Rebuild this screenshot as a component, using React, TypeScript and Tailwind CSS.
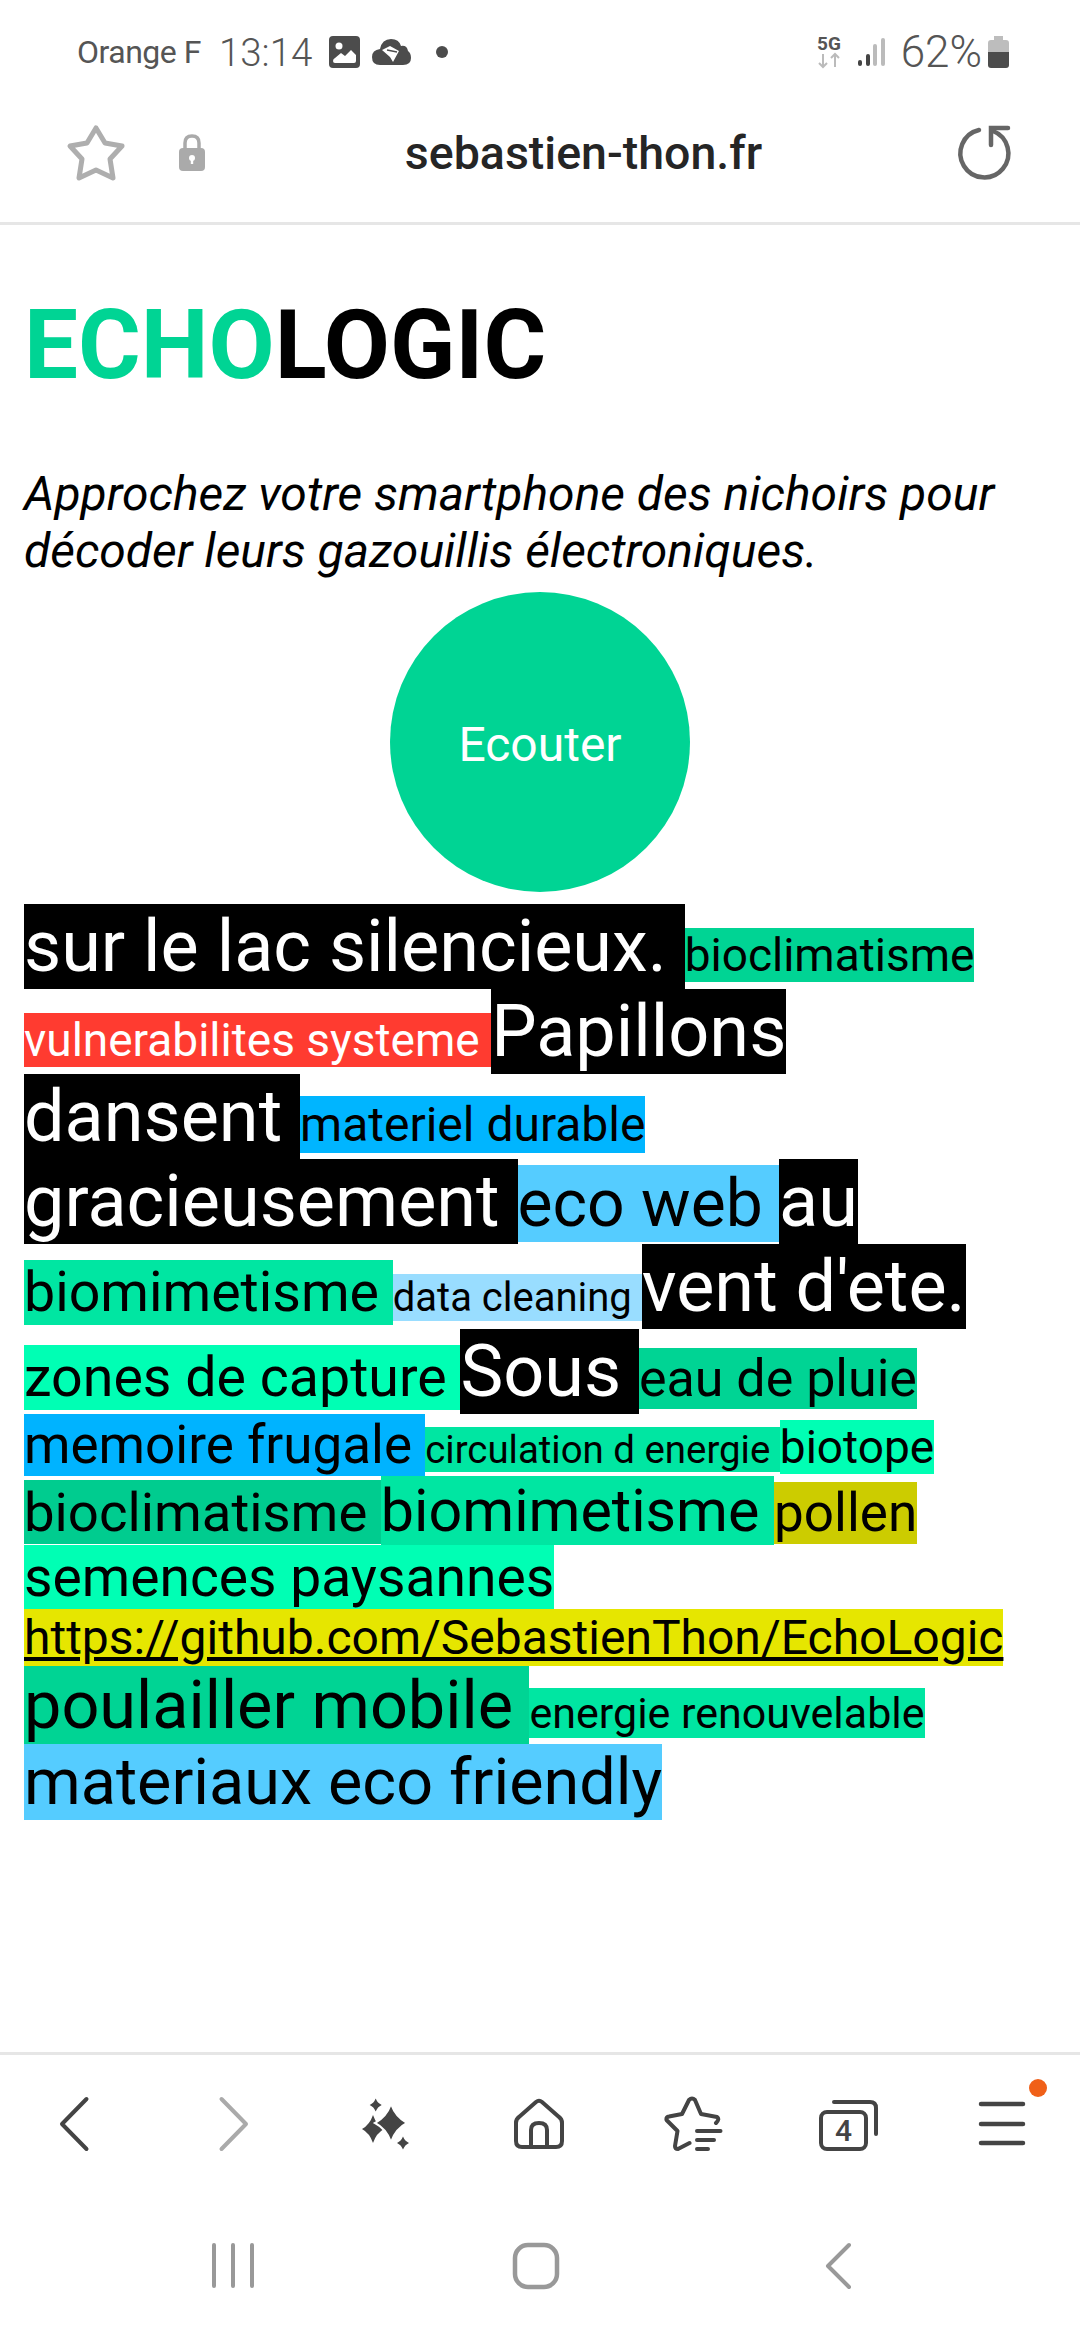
import React from "react";

type Tag = {
  text: string;
  size: string;
  color: string;
};

const tags: Tag[] = [
  { text: "sur le lac silencieux. ", size: "text-[72px]", color: "bg-black text-white" },
  { text: "bioclimatisme ", size: "text-[46px]", color: "bg-[#00d494] text-black" },
  { text: "vulnerabilites systeme ", size: "text-[46px]", color: "bg-[#ff3b30] text-white" },
  { text: "Papillons ", size: "text-[72px]", color: "bg-black text-white" },
  { text: "dansent ", size: "text-[72px]", color: "bg-black text-white" },
  { text: "materiel durable ", size: "text-[48px]", color: "bg-[#00b5ff] text-black" },
  { text: "gracieusement ", size: "text-[72px]", color: "bg-black text-white" },
  { text: "eco web ", size: "text-[66px]", color: "bg-[#55ccff] text-black" },
  { text: "au ", size: "text-[72px]", color: "bg-black text-white" },
  { text: "biomimetisme ", size: "text-[55.5px]", color: "bg-[#00e6a2] text-black" },
  { text: "data cleaning ", size: "text-[40px]", color: "bg-[#99ddff] text-black" },
  { text: "vent d'ete. ", size: "text-[72px]", color: "bg-black text-white" },
  { text: "zones de capture ", size: "text-[55.5px]", color: "bg-[#00ffb4] text-black" },
  { text: "Sous ", size: "text-[72px]", color: "bg-black text-white" },
  { text: "eau de pluie ", size: "text-[52px]", color: "bg-[#00d494] text-black" },
  { text: "memoire frugale ", size: "text-[53px]", color: "bg-[#00b3ff] text-black" },
  { text: "circulation d energie ", size: "text-[38.4px]", color: "bg-[#00e6a2] text-black" },
  { text: "biotope ", size: "text-[46px]", color: "bg-[#00ffb4] text-black" },
  { text: "bioclimatisme ", size: "text-[54.5px]", color: "bg-[#00cc8f] text-black" },
  { text: "biomimetisme ", size: "text-[59.2px]", color: "bg-[#00e6a2] text-black" },
  { text: "pollen ", size: "text-[53px]", color: "bg-[#cccc00] text-black" },
  { text: "semences paysannes ", size: "text-[55.2px]", color: "bg-[#00ffb4] text-black" },
];

const tagsAfterLink: Tag[] = [
  { text: "poulailler mobile ", size: "text-[66.6px]", color: "bg-[#00d494] text-black" },
  { text: "energie renouvelable ", size: "text-[43px]", color: "bg-[#00e6a2] text-black" },
  { text: "materiaux eco friendly ", size: "text-[64.7px]", color: "bg-[#55ccff] text-black" },
];

const sparkle = (cx: number, cy: number, w: number, h: number) =>
  `M${cx} ${cy - h}Q${cx + w * 0.3} ${cy - h * 0.3} ${cx + w} ${cy}Q${cx + w * 0.3} ${cy + h * 0.3} ${cx} ${cy + h}Q${cx - w * 0.3} ${cy + h * 0.3} ${cx - w} ${cy}Q${cx - w * 0.3} ${cy - h * 0.3} ${cx} ${cy - h}Z`;

const StatusBar = () => (
  <div className="flex h-[104px] items-center pl-[77px] pr-[71px] text-[#555555]">
    <span className="text-[32px] tracking-[-0.5px]">Orange F</span>
    <span className="ml-[18px] text-[38.5px] font-light">13:14</span>
    <svg className="ml-[17px]" width="31" height="32" viewBox="0 0 31 32">
      <rect x="0" y="0" width="31" height="32" rx="4" fill="#4c4c4c" />
      <circle cx="10" cy="10" r="3.5" fill="#fff" />
      <path d="M4 25Q4 23 6 22L12 17L16 20L22 14L27 19V25Q27 27 25 27H6Q4 27 4 25Z" fill="#fff" />
    </svg>
    <svg className="ml-[12px]" width="39" height="28" viewBox="0 0 39 28">
      <path
        d="M8 27Q0 27 0 19Q0 12 8 11Q10 1 19 1Q27 1 29 8Q35 7 36 13Q39 15 39 20Q39 27 31 27Z"
        fill="#4c4c4c"
      />
      <path d="M10 12L18 8L27 13L21 24L18 19Z" fill="#fff" />
      <path d="M15 12L25 14" stroke="#4c4c4c" strokeWidth="1.5" />
    </svg>
    <span className="ml-[25px] size-[12px] rounded-full bg-[#4c4c4c]" />
    <svg className="ml-auto" width="28" height="38" viewBox="0 0 28 38">
      <text x="0" y="17" fontFamily="Roboto" fontSize="19" fontWeight="700" fill="#555">
        5G
      </text>
      <path d="M6 21V34M2 30L6 34L10 30" fill="none" stroke="#bbb" strokeWidth="2" />
      <path d="M18 34V21M14 25L18 21L22 25" fill="none" stroke="#bbb" strokeWidth="2" />
    </svg>
    <svg className="ml-[13px]" width="28" height="30" viewBox="0 0 28 30">
      <rect x="0" y="23" width="4" height="6" rx="2" fill="#444" />
      <rect x="8" y="17" width="4" height="12" rx="2" fill="#444" />
      <rect x="15" y="7" width="4" height="22" rx="2" fill="#bbb" />
      <rect x="23" y="1" width="4" height="28" rx="2" fill="#bbb" />
    </svg>
    <span className="ml-[15px] text-[44px] font-light">62%</span>
    <svg className="ml-[6px]" width="21" height="32" viewBox="0 0 21 32">
      <path d="M6 0H15V4H18Q21 4 21 7V16H0V7Q0 4 3 4H6Z" fill="#bdbdbd" />
      <path d="M0 16H21V29Q21 32 18 32H3Q0 32 0 29Z" fill="#4c4c4c" />
    </svg>
  </div>
);

const AddressBar = () => (
  <div className="flex h-[121px] items-center border-b-[3px] border-[#e6e6e6] pb-[20px] pl-[65px] pr-[66px]">
    <svg width="62" height="60" viewBox="0 0 62 60">
      <path
        d="M31 5L40 20L57 23L45 36L48 55L31 47L14 55L17 36L5 23L22 20Z"
        fill="none"
        stroke="#aeaeae"
        strokeWidth="5"
        strokeLinejoin="round"
      />
    </svg>
    <svg className="ml-[51px]" width="28" height="38" viewBox="0 0 28 38">
      <path d="M7 16V9Q7 2 14 2Q21 2 21 9V16" fill="none" stroke="#aaa" strokeWidth="3.5" />
      <rect x="1" y="14" width="26" height="23" rx="4" fill="#aaa" />
      <circle cx="14" cy="24" r="3" fill="#fff" />
      <rect x="12.8" y="24" width="2.4" height="6" fill="#fff" />
    </svg>
    <span className="flex-1 pl-[7px] text-center text-[46.5px] font-medium text-[#252525]">
      sebastien-thon.fr
    </span>
    <svg width="60" height="60" viewBox="0 0 60 60">
      <path
        d="M25 7A24 24 0 1 0 39 8"
        fill="none"
        stroke="#666"
        strokeWidth="4.5"
        strokeLinecap="round"
      />
      <path
        d="M54 5H37V22"
        fill="none"
        stroke="#666"
        strokeWidth="4.5"
        strokeLinecap="round"
      />
    </svg>
  </div>
);

const Page = () => (
  <main className="flex-1 px-[24px] leading-[normal]">
    <h1 className="mt-[64px] mb-[64px] text-[96px] font-bold text-black">
      <span className="text-[#00d494]">ECHO</span>LOGIC
    </h1>
    <p className="text-[48px] leading-[57px] italic text-black">
      Approchez votre smartphone des nichoirs pour décoder leurs gazouillis électroniques.
    </p>
    <button className="mx-auto mt-[13px] mb-[12px] flex size-[300px] items-center justify-center rounded-full bg-[#00d494] pt-[4px] text-[48px] text-white">
      Ecouter
    </button>
    <div>
      {tags.map((tag, i) => (
        <span key={i} className={`${tag.size} ${tag.color}`}>
          {tag.text}
        </span>
      ))}
      <a href="#" className="bg-[#e6e600] text-[48px] text-black underline">
        https://github.com/SebastienThon/EchoLogic
      </a>{" "}
      {tagsAfterLink.map((tag, i) => (
        <span key={i} className={`${tag.size} ${tag.color}`}>
          {tag.text}
        </span>
      ))}
    </div>
  </main>
);

const stroke = {
  fill: "none",
  stroke: "#444",
  strokeWidth: 4,
  strokeLinecap: "round" as const,
  strokeLinejoin: "round" as const,
};

const Toolbar = () => (
  <div className="grid grid-cols-7 justify-items-center border-t-[3px] border-[#e6e6e6] pt-[40px]">
    <svg width="60" height="60" viewBox="0 0 60 60">
      <path d="M39.5 4L15 29L39.5 54" {...stroke} />
    </svg>
    <svg width="60" height="60" viewBox="0 0 60 60">
      <path d="M20.5 4L45 29L20.5 54" {...stroke} stroke="#aaa" />
    </svg>
    <svg width="60" height="60" viewBox="0 0 60 60">
      <path d={sparkle(17, 34, 11, 14)} fill="#444" />
      <path d={sparkle(35, 28, 16, 19)} fill="#444" stroke="#fff" strokeWidth="2" />
      <path d={sparkle(19.7, 10, 6, 6.5)} fill="#444" />
      <path d={sparkle(47, 48, 6, 6.5)} fill="#444" />
    </svg>
    <svg width="60" height="60" viewBox="0 0 60 60">
      <path
        d="M6 28Q6 24 9 22L26 7Q29 4.5 32 7L49 22Q52 24 52 28V46Q52 52 46 52H12Q6 52 6 46Z"
        {...stroke}
      />
      <path d="M21 52V35Q21 28 29 28Q37 28 37 35V52" {...stroke} />
    </svg>
    <svg width="60" height="60" viewBox="0 0 60 60">
      <path
        d="M25.5 48L14 54Q11 54 11 51L13.5 36L2.5 25Q2 22 5 21.5L18 19L25 5Q28 2 31 5L37 19L53 22Q56 24 52 28"
        {...stroke}
      />
      <path d="M33 36H56.5M33 45H50M33 54H44" {...stroke} />
    </svg>
    <svg width="60" height="60" viewBox="0 0 60 60">
      <rect x="2" y="17" width="45" height="37" rx="6" {...stroke} />
      <path d="M15 7H51Q57 7 57 13V39" {...stroke} />
      <text
        x="24.5"
        y="46"
        textAnchor="middle"
        fontFamily="Roboto"
        fontSize="30"
        fontWeight="500"
        fill="#444"
      >
        4
      </text>
    </svg>
    <div className="relative size-[60px]">
      <svg width="60" height="60" viewBox="0 0 60 60">
        <path d="M8 9H50M8 29H50M8 48H50" {...stroke} strokeWidth={4.5} />
      </svg>
      <span className="absolute left-[56px] top-[-16px] size-[18px] rounded-full bg-[#f06018]" />
    </div>
  </div>
);

const GestureBar = () => (
  <div className="mt-[81px] mb-[44px] flex justify-between pl-[203px] pr-[212px]">
    <svg width="60" height="60" viewBox="0 0 60 60">
      <path d="M11 9V50M30 9V50M49 9V50" {...stroke} stroke="#999" />
    </svg>
    <svg width="60" height="60" viewBox="0 0 60 60">
      <rect x="9" y="9" width="42" height="42" rx="13" {...stroke} stroke="#999" strokeWidth={4.5} />
    </svg>
    <svg width="60" height="60" viewBox="0 0 60 60">
      <path d="M41 9L20 30L41 51" {...stroke} stroke="#999" />
    </svg>
  </div>
);

const App = () => {
  return (
    <div className="flex h-[2340px] w-[1080px] flex-col overflow-hidden bg-white font-[Roboto,sans-serif] leading-[normal]">
      <StatusBar />
      <AddressBar />
      <Page />
      <Toolbar />
      <GestureBar />
    </div>
  );
};

export default App;
